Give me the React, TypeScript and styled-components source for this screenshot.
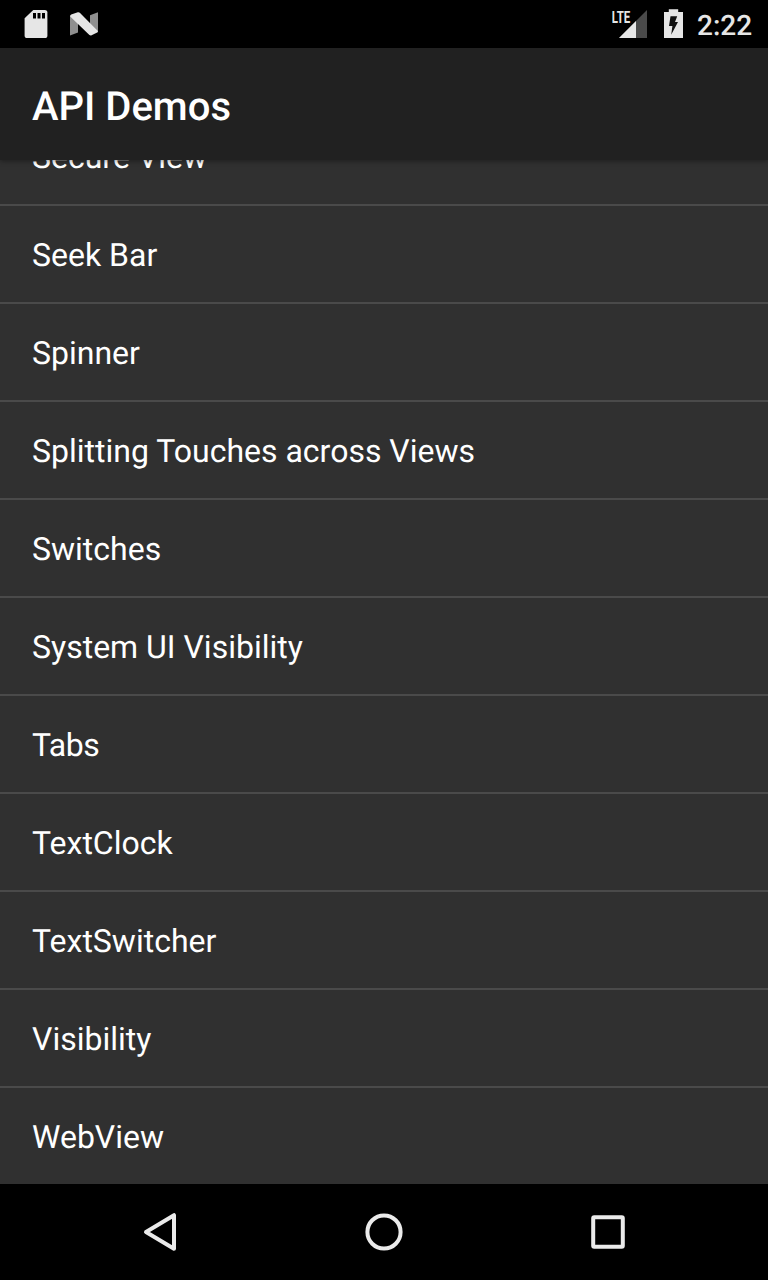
import React from 'react';
import styled, { createGlobalStyle } from 'styled-components';

const GlobalStyle = createGlobalStyle`
  body {
    margin: 0;
    background: #000;
    font-family: Roboto, 'Liberation Sans', sans-serif;
    text-rendering: geometricPrecision;
  }
`;

const Screen = styled.div`
  display: flex;
  flex-direction: column;
  width: 768px;
  height: 1280px;
  overflow: hidden;
  background: #303030;
`;

const StatusBar = styled.header`
  display: flex;
  flex: none;
  align-items: center;
  justify-content: space-between;
  height: 48px;
  padding: 0 16px 0 24px;
  box-sizing: border-box;
  background: #000;
`;

const StatusGroup = styled.div<{ $gap: number }>`
  display: flex;
  align-items: center;
  height: 48px;
  gap: ${({ $gap }) => $gap}px;
`;

const StatusIcon = styled.svg`
  display: block;
  flex: none;
`;

const Clock = styled.span`
  width: 55px;
  margin-left: -2px;
  padding-top: 4px;
  color: #e6e6e6;
  font-size: 28px;
  font-weight: 500;
  line-height: 34px;
  white-space: nowrap;
`;

const AppBar = styled.div`
  position: relative;
  z-index: 1;
  display: flex;
  flex: none;
  align-items: center;
  height: 112px;
  padding: 6px 32px 0;
  box-sizing: border-box;
  background: #212121;
  box-shadow: 0 1px 5px rgba(0, 0, 0, 0.4);
`;

const Title = styled.h1`
  margin: 0;
  color: #fff;
  font-size: 40px;
  font-weight: 500;
  line-height: 48px;
`;

const List = styled.ul`
  display: flex;
  flex: 1;
  flex-direction: column;
  justify-content: flex-end;
  min-height: 0;
  margin: 0;
  padding: 0;
  overflow: hidden;
  list-style: none;
`;

const Row = styled.li<{ $tracking?: number }>`
  display: flex;
  flex: none;
  align-items: center;
  height: 96px;
  padding: 2px 32px 0;
  box-sizing: border-box;
  color: #fff;
  font-size: 32px;
  line-height: 38px;
  letter-spacing: ${({ $tracking = 0 }) => $tracking}px;

  & + & {
    height: 98px;
    border-top: 2px solid #4a4a4a;
  }
`;

const NavBar = styled.nav`
  display: flex;
  flex: none;
  align-items: center;
  justify-content: center;
  height: 96px;
  gap: 176px;
  background: #000;
`;

const NavButton = styled.button`
  width: 48px;
  height: 48px;
  padding: 0;
  border: 0;
  background: transparent;

  svg {
    display: block;
    fill: none;
    stroke: #ebebeb;
    stroke-width: 4;
    stroke-linejoin: round;
  }
`;

const items: { label: string; tracking?: number }[] = [
  { label: 'Secure View' },
  { label: 'Seek Bar' },
  { label: 'Spinner' },
  { label: 'Splitting Touches across Views' },
  { label: 'Switches' },
  { label: 'System UI Visibility' },
  { label: 'Tabs', tracking: -0.5 },
  { label: 'TextClock' },
  { label: 'TextSwitcher' },
  { label: 'Visibility' },
  { label: 'WebView' },
];

const SdCardIcon = () => (
  <StatusIcon width="24" height="48" viewBox="24 0 24 48">
    <path
      d="M33.3 10H44.8Q47.4 10 47.4 12.6V35.4Q47.4 38 44.8 38H27.2Q24.6 38 24.6 35.4V18.3Z"
      fill="#e6e6e6"
    />
    <path d="M33 13h3v5.5h-3zM37.5 13h3v5.5h-3zM42 13h3v5.5h-3z" fill="#000" />
  </StatusIcon>
);

const NougatIcon = () => (
  <StatusIcon width="30" height="48" viewBox="69 0 30 48">
    <path d="M70 15.5V35.5L78 32.5V22Z" fill="#8f8f8f" />
    <path d="M98 12.3V32.5L90 25V15.3Z" fill="#8f8f8f" />
    <path
      d="M70.2 16.4Q69.9 15 71.2 14.6L77.8 12.3Q79 12 79.8 12.8L97.6 30.8Q98.4 31.8 97.2 32.4L91.6 35.2Q90.4 35.7 89.4 34.9Z"
      fill="#e6e6e6"
    />
  </StatusIcon>
);

const SignalIcon = () => (
  <StatusIcon width="36" height="48" viewBox="612 0 36 48">
    <path d="M647 10V38H619Z" fill="#4a4a4a" />
    <path d="M636 21V38H619Z" fill="#e6e6e6" />
    <text
      x="611.8"
      y="22.6"
      fill="#e6e6e6"
      fontSize="17"
      fontWeight="700"
      textLength="18.5"
      lengthAdjust="spacingAndGlyphs"
    >
      LTE
    </text>
  </StatusIcon>
);

const BatteryIcon = () => (
  <StatusIcon width="19" height="48" viewBox="664 0 19 48">
    <path d="M668.8 9.2H678.2V12H683V38H664V12H668.8Z" fill="#e6e6e6" />
    <path d="M670.5 16.2H677.2L675 22H678L671.2 34.8L672.4 26H669Z" fill="#111" />
  </StatusIcon>
);

export default function App() {
  return (
    <>
      <GlobalStyle />
      <Screen>
        <StatusBar>
          <StatusGroup $gap={21}>
            <SdCardIcon />
            <NougatIcon />
          </StatusGroup>
          <StatusGroup $gap={16}>
            <SignalIcon />
            <BatteryIcon />
            <Clock>2:22</Clock>
          </StatusGroup>
        </StatusBar>
        <AppBar>
          <Title>API Demos</Title>
        </AppBar>
        <List>
          {items.map(({ label, tracking }) => (
            <Row key={label} $tracking={tracking}>
              {label}
            </Row>
          ))}
        </List>
        <NavBar>
          <NavButton aria-label="Back">
            <svg width="48" height="48" viewBox="136 1208 48 48">
              <path d="M146 1232L174 1215.2V1248.8Z" />
            </svg>
          </NavButton>
          <NavButton aria-label="Home">
            <svg width="48" height="48" viewBox="360 1208 48 48">
              <circle cx="384" cy="1232" r="16.6" />
            </svg>
          </NavButton>
          <NavButton aria-label="Recent apps">
            <svg width="48" height="48" viewBox="584 1208 48 48">
              <rect x="593.2" y="1217.2" width="29.6" height="29.6" rx="1" />
            </svg>
          </NavButton>
        </NavBar>
      </Screen>
    </>
  );
}
